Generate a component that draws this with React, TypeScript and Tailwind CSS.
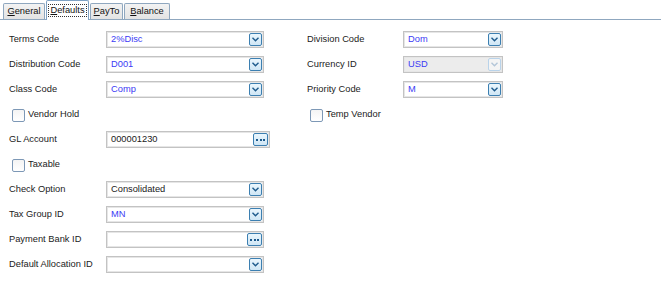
import React from "react";

const font = "font-['Liberation_Sans',Arial,sans-serif]";

function Chevron({ disabled }: { disabled?: boolean }) {
  return (
    <span
      className={
        "flex h-[13px] w-[13px] items-center justify-center rounded-[2px] border " +
        (disabled
          ? "border-[#b9d3ea] bg-[#f4f4f4]"
          : "border-[#3c7fb1] bg-gradient-to-b from-[#eaf6fd] to-[#cfe6f5]")
      }
    >
      <svg width="7" height="5" viewBox="0 0 7 5">
        <path
          d="M0.5 0.8 L3.5 3.8 L6.5 0.8"
          fill="none"
          stroke={disabled ? "#b3c6d8" : "#1d5a8c"}
          strokeWidth="1.4"
        />
      </svg>
    </span>
  );
}

function Ellipsis() {
  return (
    <span className="flex h-[13px] w-[15px] items-center justify-center gap-[1.5px] rounded-[2px] border border-[#3c7fb1] bg-gradient-to-b from-[#eaf6fd] to-[#cfe6f5]">
      <span className="h-[2px] w-[2px] bg-[#1d5a8c]" />
      <span className="h-[2px] w-[2px] bg-[#1d5a8c]" />
      <span className="h-[2px] w-[2px] bg-[#1d5a8c]" />
    </span>
  );
}

function Select({
  value,
  width,
  blue,
  disabled,
}: {
  value?: string;
  width: string;
  blue?: boolean;
  disabled?: boolean;
}) {
  return (
    <div
      className={
        "flex h-[17px] items-center justify-between border border-[#c3c3c3] pl-[4px] pr-[1px] shadow-[inset_0_0_0_1px_#e6e6e6] " +
        width +
        (disabled ? " bg-[#ececec]" : " bg-white")
      }
    >
      <span className={blue ? "text-[#3b3bf5]" : "text-[#1a1a1a]"}>{value}</span>
      <Chevron disabled={disabled} />
    </div>
  );
}

function Lookup({ value, width }: { value?: string; width: string }) {
  return (
    <div
      className={
        "flex h-[17px] items-center justify-between border border-[#c3c3c3] bg-white pl-[4px] pr-[1px] shadow-[inset_0_0_0_1px_#e6e6e6] " +
        width
      }
    >
      <span className="text-[#1a1a1a]">{value}</span>
      <Ellipsis />
    </div>
  );
}

function Row({ label, children, labelW }: { label: string; children: React.ReactNode; labelW: string }) {
  return (
    <div className="flex h-[25px] items-center">
      <span className={"text-[#222] " + labelW}>{label}</span>
      {children}
    </div>
  );
}

function Check({ label }: { label: string }) {
  return (
    <div className="flex h-[25px] items-center gap-[3px] pl-[3px] pt-[1px]">
      <span className="h-[13px] w-[13px] rounded-[2px] border border-[#7d98b6] bg-gradient-to-b from-[#f4f4f4] to-white" />
      <span className="text-[#222]">{label}</span>
    </div>
  );
}

function Tab({ label, u, active, w }: { label: string; u: string; active?: boolean; w: string }) {
  const rest = label.slice(u.length);
  if (active) {
    return (
      <div
        className={
          "relative -mb-px flex h-[20px] items-center justify-center rounded-t-[2px] border border-b-0 border-[#7fa2c4] bg-white " +
          w
        }
      >
        <span className="border border-dotted border-[#333] px-[1px] leading-[11px] text-[#111]">
          <span className="underline">{u}</span>
          {rest}
        </span>
      </div>
    );
  }
  return (
    <div
      className={
        "flex h-[16px] items-center justify-center rounded-t-[2px] border border-b-0 border-[#8fa7bf] bg-gradient-to-b from-[#f3f3f3] to-[#e3e3e3] text-[#111] " +
        w
      }
    >
      <span>
        <span className="underline">{u}</span>
        {rest}
      </span>
    </div>
  );
}

export default function App() {
  return (
    <div className={"h-[294px] w-[661px] overflow-hidden bg-white text-[9.3px] " + font}>
      <div className="flex h-[20px] items-end gap-[1px] border-b border-[#8fa7bf] pl-[3px]">
        <Tab label="General" u="G" w="w-[42px]" />
        <Tab label="Defaults" u="D" w="w-[43px]" active />
        <Tab label="PayTo" u="P" w="w-[33px]" />
        <Tab label="Balance" u="B" w="w-[46px]" />
      </div>

      <div className="flex pt-[7px]">
        <div className="w-[307px] pl-[9px]">
          <Row label="Terms Code" labelW="w-[97px]">
            <Select value="2%Disc" width="w-[158px]" blue />
          </Row>
          <Row label="Distribution Code" labelW="w-[97px]">
            <Select value="D001" width="w-[158px]" blue />
          </Row>
          <Row label="Class Code" labelW="w-[97px]">
            <Select value="Comp" width="w-[158px]" blue />
          </Row>
          <Check label="Vendor Hold" />
          <Row label="GL Account" labelW="w-[97px]">
            <Lookup value="000001230" width="w-[164px]" />
          </Row>
          <Check label="Taxable" />
          <Row label="Check Option" labelW="w-[97px]">
            <Select value="Consolidated" width="w-[158px]" />
          </Row>
          <Row label="Tax Group ID" labelW="w-[97px]">
            <Select value="MN" width="w-[158px]" blue />
          </Row>
          <Row label="Payment Bank ID" labelW="w-[97px]">
            <Lookup width="w-[158px]" />
          </Row>
          <Row label="Default Allocation ID" labelW="w-[97px]">
            <Select width="w-[158px]" />
          </Row>
        </div>

        <div>
          <Row label="Division Code" labelW="w-[96px]">
            <Select value="Dom" width="w-[100px]" blue />
          </Row>
          <Row label="Currency ID" labelW="w-[96px]">
            <Select value="USD" width="w-[100px]" blue disabled />
          </Row>
          <Row label="Priority Code" labelW="w-[96px]">
            <Select value="M" width="w-[100px]" blue />
          </Row>
          <Check label="Temp Vendor" />
        </div>
      </div>
    </div>
  );
}
